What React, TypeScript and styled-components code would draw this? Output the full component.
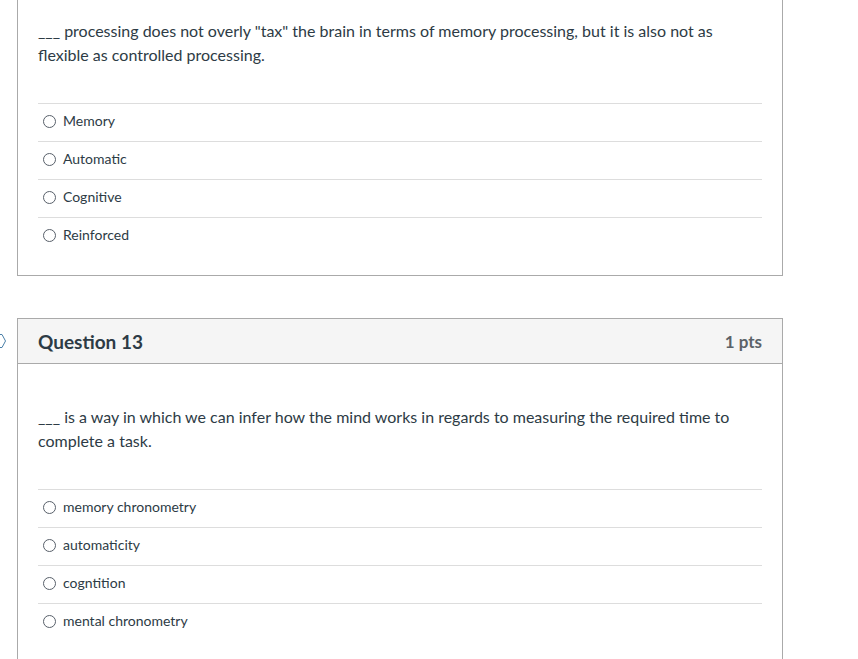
import React, { FC } from 'react'
import styled, { createGlobalStyle } from 'styled-components'

const GlobalStyle = createGlobalStyle`
  html, body {
    margin: 0;
    padding: 0;
    background: #ffffff;
  }
  body {
    font-family: Lato, 'Helvetica Neue', Arial, sans-serif;
    color: #2d3b45;
    overflow: hidden;
  }
`

const Page = styled.div`
  padding: 0 75px 0 17px;
  height: 659px;
  overflow: hidden;
`

const Card = styled.div<{ $offset?: number }>`
  position: relative;
  border: 1px solid #aaaaaa;
  margin-top: ${({ $offset }) => $offset ?? 0}px;
  background: #fff;
`

const Header = styled.div`
  display: flex;
  justify-content: space-between;
  align-items: center;
  height: 44px;
  padding: 0 20px;
  background: #f5f5f5;
  border-bottom: 1px solid #aaaaaa;
`

const Title = styled.h2`
  margin: 0;
  font-size: 19px;
  font-weight: 700;
  color: #2d3b45;
`

const Points = styled.span`
  font-size: 17px;
  font-weight: 700;
  color: #5b6268;
`

const Flag = styled.svg`
  position: absolute;
  left: -25px;
  top: 14px;
`

const Body = styled.div`
  padding: 41px 20px 20px;
`

const QuestionText = styled.p`
  margin: 0 0 36px;
  font-size: 16px;
  line-height: 24px;
`

const Answers = styled.div`
  display: flex;
  flex-direction: column;
`

const Answer = styled.label`
  display: flex;
  align-items: center;
  height: 33px;
  padding-bottom: 4px;
  border-top: 1px solid #dddddd;
  font-size: 14px;
  color: #2d3b45;
`

const Radio = styled.span`
  width: 11px;
  height: 11px;
  border: 1px solid #58606a;
  border-radius: 50%;
  margin: 2px 7px 0 5px;
`

interface QuestionProps {
  text: string
  answers: string[]
}

const QuestionBody: FC<QuestionProps> = ({ text, answers }) => (
  <Body>
    <QuestionText>{text}</QuestionText>
    <Answers>
      {answers.map((a) => (
        <Answer key={a}>
          <Radio />
          {a}
        </Answer>
      ))}
    </Answers>
  </Body>
)

const App: FC = () => (
  <Page>
    <GlobalStyle />
    <Card $offset={-23}>
      <QuestionBody
        text={'___ processing does not overly "tax" the brain in terms of memory processing, but it is also not as flexible as controlled processing.'}
        answers={['Memory', 'Automatic', 'Cognitive', 'Reinforced']}
      />
    </Card>
    <Card $offset={42}>
      <Flag width="14" height="16" viewBox="0 0 14 16">
        <path d="M1 1.5 H9 L12.5 8 L9 14.5 H1" fill="none" stroke="#4a7fa8" strokeWidth="1" />
      </Flag>
      <Header>
        <Title>Question 13</Title>
        <Points>1 pts</Points>
      </Header>
      <QuestionBody
        text="___ is a way in which we can infer how the mind works in regards to measuring the required time to complete a task."
        answers={['memory chronometry', 'automaticity', 'cogntition', 'mental chronometry']}
      />
    </Card>
  </Page>
)

export default App
